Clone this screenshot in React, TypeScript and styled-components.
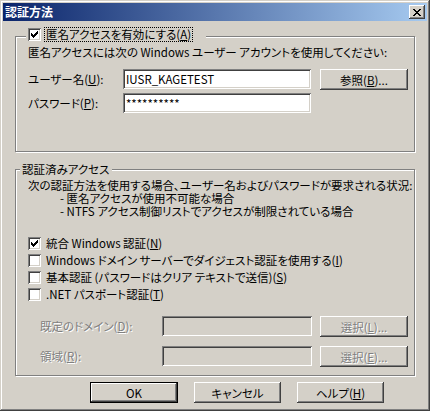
import styled, { createGlobalStyle } from 'styled-components';

const GlobalStyle = createGlobalStyle`
  html, body {
    margin: 0;
    padding: 0;
    background: #d4d0c8;
  }
  body {
    font-family: "Noto Sans CJK JP", "Noto Sans", sans-serif;
    font-size: 11.5px;
  }
`;

const Window = styled.div`
  width: 430px;
  height: 411px;
  box-sizing: border-box;
  padding: 3px;
  display: flex;
  flex-direction: column;
  background: #d4d0c8;
  color: #000;
  font-feature-settings: "palt";
  box-shadow: inset -1px -1px #404040, inset 1px 1px #d4d0c8,
    inset -2px -2px #808080, inset 2px 2px #fff;
`;

const TitleBar = styled.div`
  height: 18px;
  display: flex;
  align-items: center;
  justify-content: space-between;
  padding-left: 2px;
  background: linear-gradient(to right, #0a246a, #a6caf0);
`;

const Title = styled.span`
  color: #fff;
  font-weight: bold;
  font-size: 12px;
  line-height: 18px;
`;

const CloseButton = styled.div`
  width: 16px;
  height: 14px;
  margin-right: 2px;
  display: flex;
  align-items: center;
  justify-content: center;
  background: #d4d0c8;
  box-shadow: inset -1px -1px #404040, inset 1px 1px #fff,
    inset -2px -2px #808080;
`;

const Body = styled.div`
  display: flex;
  flex-direction: column;
  padding: 15px 12px 0 12px;
`;

const Group = styled.div<{ $height: number; $mt?: number }>`
  position: relative;
  box-sizing: border-box;
  height: ${p => p.$height}px;
  margin-top: ${p => p.$mt ?? 0}px;
  padding: 9px 6px 0 12px;
  border: 1px solid #808080;
  box-shadow: inset 1px 1px #fff, 1px 1px #fff;
  display: flex;
  flex-direction: column;
`;

const Legend = styled.div<{ $left: number; $top: number; $width?: number }>`
  position: absolute;
  left: ${p => p.$left}px;
  top: ${p => p.$top}px;
  width: ${p => (p.$width ? `${p.$width}px` : 'auto')};
  height: 15px;
  padding: 0 2px 0 2px;
  display: flex;
  align-items: center;
  gap: 4px;
  background: #d4d0c8;
  line-height: 13px;
`;

const Line = styled.div<{ $indent?: number }>`
  height: 13px;
  line-height: 13px;
  padding-left: ${p => p.$indent ?? 0}px;
  white-space: pre;
`;

const FormRow = styled.div<{ $mt: number; $indent?: number }>`
  display: flex;
  align-items: flex-start;
  height: 21px;
  margin-top: ${p => p.$mt}px;
  padding-left: ${p => p.$indent ?? 0}px;
`;

const FieldLabel = styled.span<{ $width: number; $disabled?: boolean }>`
  width: ${p => p.$width}px;
  height: 20px;
  line-height: 20px;
  color: ${p => (p.$disabled ? '#808080' : '#000')};
  text-shadow: ${p => (p.$disabled ? '1px 1px #fff' : 'none')};
`;

const Field = styled.input<{ $width: number }>`
  width: ${p => p.$width}px;
  height: 20px;
  box-sizing: border-box;
  margin: 0;
  padding: 0 3px;
  border: none;
  outline: none;
  font: inherit;
  font-size: 11.5px;
  color: #000;
  background: #fff;
  box-shadow: inset 1px 1px #808080, inset -1px -1px #fff,
    inset 2px 2px #404040, inset -2px -2px #d4d0c8;

  &:disabled {
    background: #d4d0c8;
  }
`;

const PushButton = styled.button<{ $width: number; $ml?: number; $default?: boolean }>`
  width: ${p => p.$width}px;
  height: 21px;
  margin: 0 0 0 ${p => p.$ml ?? 0}px;
  padding: 0;
  border: none;
  font: inherit;
  font-size: 11.5px;
  font-feature-settings: "palt";
  color: #000;
  background: #d4d0c8;
  box-shadow: ${p =>
    p.$default
      ? 'inset 0 0 0 1px #000, inset -2px -2px #404040, inset 2px 2px #fff, inset -3px -3px #808080'
      : 'inset -1px -1px #404040, inset 1px 1px #fff, inset -2px -2px #808080, inset 2px 2px #d4d0c8'};

  &:disabled {
    color: #808080;
    text-shadow: 1px 1px #fff;
  }
`;

const CheckRow = styled.div`
  display: flex;
  align-items: center;
  height: 17px;
  gap: 5px;
  line-height: 13px;
  white-space: pre;
`;

const CheckList = styled.div<{ $mt: number }>`
  display: flex;
  flex-direction: column;
  margin-top: ${p => p.$mt}px;
`;

const Box = styled.span`
  width: 13px;
  height: 13px;
  flex: none;
  display: block;
  background: #fff;
  box-shadow: inset 1px 1px #808080, inset -1px -1px #fff,
    inset 2px 2px #404040, inset -2px -2px #d4d0c8;
`;

const FocusLabel = styled.span`
  padding: 0 1px;
  outline: 1px dotted #000;
  line-height: 13px;
  white-space: pre;
`;

const U = styled.span`
  text-decoration: underline;
`;

const ButtonRow = styled.div`
  display: flex;
  gap: 16px;
  margin-top: 6px;
  padding-left: 75px;
`;

const checkCols = [
  [0, 2], [1, 3], [2, 4], [3, 3], [4, 2], [5, 1], [6, 0],
];

function CheckBox({ checked }: { checked?: boolean }) {
  return (
    <Box>
      {checked && (
        <svg width="13" height="13" viewBox="0 0 13 13" shapeRendering="crispEdges">
          {checkCols.map(([x, y]) => (
            <rect key={x} x={3 + x} y={3 + y} width="1" height="3" fill="#000" />
          ))}
        </svg>
      )}
    </Box>
  );
}

function CloseIcon() {
  const d = [
    [0, 0], [1, 0], [6, 0], [7, 0],
    [1, 1], [2, 1], [5, 1], [6, 1],
    [2, 2], [3, 2], [4, 2], [5, 2],
    [3, 3], [4, 3],
    [2, 4], [3, 4], [4, 4], [5, 4],
    [1, 5], [2, 5], [5, 5], [6, 5],
    [0, 6], [1, 6], [6, 6], [7, 6],
  ];
  return (
    <svg width="8" height="7" viewBox="0 0 8 7" shapeRendering="crispEdges">
      {d.map(([x, y]) => (
        <rect key={`${x}-${y}`} x={x} y={y} width="1" height="1" fill="#000" />
      ))}
    </svg>
  );
}

export default function App() {
  return (
    <>
      <GlobalStyle />
      <Window>
        <TitleBar>
          <Title>認証方法</Title>
          <CloseButton>
            <CloseIcon />
          </CloseButton>
        </TitleBar>

        <Body>
          <Group $height={116}>
            <Legend $left={10} $top={-10} $width={176}>
              <CheckBox checked />
              <FocusLabel>
                匿名アクセスを有効にする(<U>A</U>)
              </FocusLabel>
            </Legend>
            <Line>匿名アクセスには次の Windows ユーザー アカウントを使用してください:</Line>
            <FormRow $mt={10}>
              <FieldLabel $width={95}>
                ユーザー名(<U>U</U>):
              </FieldLabel>
              <Field $width={188} defaultValue="IUSR_KAGETEST" />
              <PushButton $width={88} $ml={9}>
                参照(<U>B</U>)...
              </PushButton>
            </FormRow>
            <FormRow $mt={3}>
              <FieldLabel $width={95}>
                パスワード(<U>P</U>):
              </FieldLabel>
              <Field $width={188} defaultValue="**********" />
            </FormRow>
          </Group>

          <Group $height={207} $mt={17}>
            <Legend $left={4} $top={-8}>
              認証済みアクセス
            </Legend>
            <Line>次の認証方法を使用する場合、ユーザー名およびパスワードが要求される状況:</Line>
            <Line $indent={32}>- 匿名アクセスが使用不可能な場合</Line>
            <Line $indent={32}>- NTFS アクセス制御リストでアクセスが制限されている場合</Line>
            <CheckList $mt={17}>
              <CheckRow>
                <CheckBox checked />
                <span>
                  統合 Windows 認証(<U>N</U>)
                </span>
              </CheckRow>
              <CheckRow>
                <CheckBox />
                <span>
                  Windows ドメイン サーバーでダイジェスト認証を使用する(<U>I</U>)
                </span>
              </CheckRow>
              <CheckRow>
                <CheckBox />
                <span>
                  基本認証 (パスワードはクリア テキストで送信)(<U>S</U>)
                </span>
              </CheckRow>
              <CheckRow>
                <CheckBox />
                <span>
                  .NET パスポート認証(<U>T</U>)
                </span>
              </CheckRow>
            </CheckList>
            <FormRow $mt={13} $indent={12}>
              <FieldLabel $width={122} $disabled>
                既定のドメイン(<U>D</U>):
              </FieldLabel>
              <Field $width={150} disabled />
              <PushButton $width={88} $ml={8} disabled>
                選択(<U>L</U>)...
              </PushButton>
            </FormRow>
            <FormRow $mt={9} $indent={12}>
              <FieldLabel $width={122} $disabled>
                領域(<U>R</U>):
              </FieldLabel>
              <Field $width={150} disabled />
              <PushButton $width={88} $ml={8} disabled>
                選択(<U>E</U>)...
              </PushButton>
            </FormRow>
          </Group>

          <ButtonRow>
            <PushButton $width={88} $default>
              OK
            </PushButton>
            <PushButton $width={87}>キャンセル</PushButton>
            <PushButton $width={87}>
              ヘルプ(<U>H</U>)
            </PushButton>
          </ButtonRow>
        </Body>
      </Window>
    </>
  );
}
